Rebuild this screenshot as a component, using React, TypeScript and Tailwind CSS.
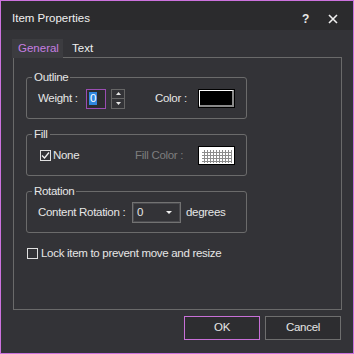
import React from 'react';

const BG = 'bg-[#333337]';

function Group({ title, children }: { title: string; children: React.ReactNode }) {
  return (
    <div className="relative h-[42px] w-[221px] rounded-[3px] border border-[#6b6b6b]">
      <span className={`absolute -top-[8px] left-[5px] ${BG} px-[2px] leading-[14px]`}>{title}</span>
      <div className="flex h-full items-center pt-[1px]">{children}</div>
    </div>
  );
}

function CheckBox({ checked }: { checked?: boolean }) {
  return (
    <span className="flex h-[11px] w-[11px] shrink-0 items-center justify-center border border-[#e0e0e0]">
      {checked && (
        <svg width="9" height="9" viewBox="0 0 9 9">
          <path d="M1 4.5 L3.5 7 L8 1.5" fill="none" stroke="#f0f0f0" strokeWidth="1.3" />
        </svg>
      )}
    </span>
  );
}

export default function App() {
  return (
    <div className={`flex h-[354px] w-[354px] flex-col border border-[#cc72de] ${BG} font-['Liberation_Sans',Arial,sans-serif] text-[11.5px] tracking-[-0.3px] text-[#e6e6e6]`}>
      {/* Title bar */}
      <div className="flex h-[29px] items-center bg-[#2b2b2d] pl-[11px] pr-[15px] pt-[6px]">
        <span className="text-[11.5px] tracking-normal text-[#f0f0f0]">Item Properties</span>
        <span className="ml-auto text-[12px] font-semibold text-[#e8e8e8]">?</span>
        <svg className="ml-[19px]" width="10" height="10" viewBox="0 0 10 10">
          <path d="M1 1 L9 9 M9 1 L1 9" stroke="#f0f0f0" strokeWidth="1.6" />
        </svg>
      </div>

      <div className="flex flex-1 flex-col pl-[11px] pt-[9px]">
        {/* Tabs */}
        <div className="relative z-10 -mb-[1px] flex h-[19px] items-center text-[11.5px] tracking-normal">
          <div className="flex h-full w-[51px] items-center bg-[#3c3c40] pl-[6px] text-[#c67ee0]">General</div>
          <div className="pl-[9px] text-[#f0f0f0]">Text</div>
        </div>

        {/* Panel */}
        <div className="ml-[1px] flex h-[253px] w-[329px] flex-col border border-[#6a6a6a] pl-[12px] pt-[19px]">
          <Group title="Outline">
            <span className="box-content w-[48px] shrink-0 pl-[11px]">Weight :</span>
            <div className="flex h-[20px] w-[20px] items-center border border-[#9a4db2] bg-[#2c2c2f] pl-[2px]">
              <span className="bg-[#2f86e0] px-[1px] leading-[13px] text-white">0</span>
            </div>
            <div className="ml-[5px] flex h-[20px] w-[14px] flex-col border border-[#666]">
              <div className="flex flex-1 items-center justify-center border-b border-[#666]">
                <svg width="5" height="3" viewBox="0 0 5 3"><path d="M2.5 0 L5 3 L0 3 Z" fill="#e8e8e8" /></svg>
              </div>
              <div className="flex flex-1 items-center justify-center">
                <svg width="5" height="3" viewBox="0 0 5 3"><path d="M0 0 L5 0 L2.5 3 Z" fill="#e8e8e8" /></svg>
              </div>
            </div>
            <span className="ml-[30px] w-[43px] shrink-0">Color :</span>
            <div className="h-[19px] w-[37px] border border-black">
              <div className="h-full w-full border-b-2 border-l border-r-2 border-t border-b-[#8a8a8a] border-l-white border-r-[#8a8a8a] border-t-white bg-black" />
            </div>
          </Group>

          <div className="mt-[15px]">
            <Group title="Fill">
              <div className="box-content flex w-[95px] shrink-0 items-center pl-[13px]">
                <CheckBox checked />
                <span className="ml-[2px]">None</span>
              </div>
              <span className="w-[63px] shrink-0 text-[#7e7e7e]">Fill Color :</span>
              <div className="h-[19px] w-[37px] border border-black bg-white">
                <svg width="35" height="17" viewBox="0 0 35 17">
                  <defs>
                    <pattern id="grid" width="3" height="3" patternUnits="userSpaceOnUse">
                      <rect width="3" height="3" fill="#8c8c8c" />
                      <rect width="2" height="2" fill="#ffffff" />
                    </pattern>
                  </defs>
                  <rect x="3" y="3" width="30" height="13" fill="url(#grid)" />
                </svg>
              </div>
            </Group>
          </div>

          <div className="mt-[15px]">
            <Group title="Rotation">
              <span className="box-content w-[94px] shrink-0 pl-[11px]">Content Rotation :</span>
              <div className="flex h-[21px] w-[49px] items-center border border-[#727272] pl-[4px] pr-[8px] shadow-[inset_0_0_0_1px_#4a4a4e]">
                <span>0</span>
                <svg className="ml-auto" width="6" height="3" viewBox="0 0 6 3"><path d="M0 0 L6 0 L3 3 Z" fill="#f0f0f0" /></svg>
              </div>
              <span className="ml-[5px]">degrees</span>
            </Group>
          </div>

          <div className="ml-[1px] mt-[12px] flex items-center">
            <CheckBox />
            <span className="ml-[3px]">Lock item to prevent move and resize</span>
          </div>
        </div>

        {/* Buttons */}
        <div className="mt-[6px] flex justify-end gap-[5px] pr-[12px]">
          <button className="h-[24px] w-[76px] border border-[#c870d8] bg-[#2d2d30] text-[#e6e6e6]">OK</button>
          <button className="h-[24px] w-[76px] border border-[#6e6e6e] bg-[#2d2d30] text-[#e6e6e6]">Cancel</button>
        </div>
      </div>
    </div>
  );
}
